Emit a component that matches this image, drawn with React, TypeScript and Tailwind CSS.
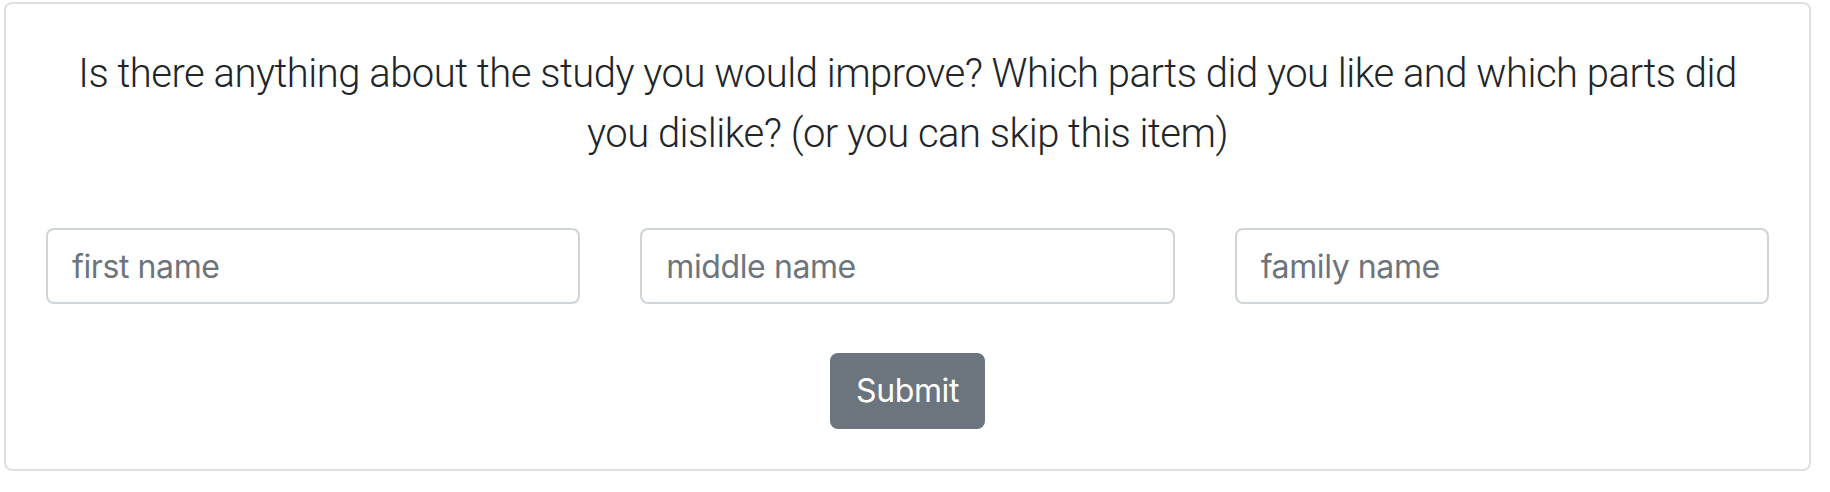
import { useState } from 'react';

const FONT = { fontFamily: 'Inter, "Noto Sans", "Liberation Sans", sans-serif' };
const HEAD_FONT = { fontFamily: 'Roboto, "Liberation Sans", sans-serif' };

function NameInput({ placeholder }: { placeholder: string }) {
  const [value, setValue] = useState('');
  return (
    <input
      type="text"
      value={value}
      onChange={(e) => setValue(e.target.value)}
      placeholder={placeholder}
      className="h-[76px] w-full rounded-[8px] border-2 border-[#ced4da] bg-white px-[24px] text-[32px] tracking-[-0.4px] text-[#495057] outline-none placeholder:text-[#6c757d]"
    />
  );
}

export default function App() {
  return (
    <div className="bg-white min-h-[492px] pt-[2px] pl-[4px]" style={FONT}>
      <div className="w-[1807px] rounded-[8px] border-2 border-[#dfdfdf] p-[40px]">
        <p
          className="px-[20px] text-center text-[40px] font-light leading-[60px] tracking-[-0.5px] text-[#212529]"
          style={HEAD_FONT}
        >
          Is there anything about the study you would improve? Which parts did you like and which parts did you
          dislike? (or you can skip this item)
        </p>
        <form
          className="mt-[64px] flex flex-col items-center"
          onSubmit={(e) => e.preventDefault()}
        >
          <div className="grid w-full grid-cols-3 gap-[60px]">
            <NameInput placeholder="first name" />
            <NameInput placeholder="middle name" />
            <NameInput placeholder="family name" />
          </div>
          <button
            type="submit"
            className="mt-[49px] h-[76px] rounded-[8px] bg-[#6c757d] px-[26px] text-[32px] tracking-[-0.4px] text-white"
          >
            Submit
          </button>
        </form>
      </div>
    </div>
  );
}
